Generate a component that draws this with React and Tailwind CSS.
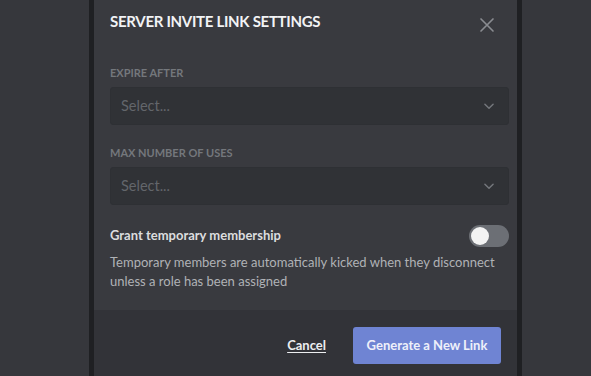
import React, { useState } from "react";

const ChevronDown = () => (
  <svg width="14" height="14" viewBox="0 0 24 24" fill="none" stroke="currentColor" strokeWidth="2.5" strokeLinecap="round" strokeLinejoin="round">
    <path d="M5 9l7 7 7-7" />
  </svg>
);

const CloseIcon = () => (
  <svg width="18" height="18" viewBox="0 0 24 24" fill="none" stroke="currentColor" strokeWidth="2.2" strokeLinecap="round">
    <path d="M4 4l16 16M20 4L4 20" />
  </svg>
);

const SelectBox = () => (
  <div className="flex h-[38px] items-center justify-between rounded-[3px] border border-[#2e3034] bg-[#303236] pl-[10px] pr-3">
    <span className="text-[14.5px] text-[#63666b]">Select...</span>
    <span className="text-[#74777c]">
      <ChevronDown />
    </span>
  </div>
);

const Label = ({ children }) => (
  <div className="text-[11px] font-bold uppercase leading-4 text-[#74777c]">{children}</div>
);

export default function App() {
  const [temp, setTemp] = useState(false);

  return (
    <div className="flex h-[376px] w-[591px] overflow-hidden bg-[#36373c] font-['Lato',sans-serif]">
      <div className="w-[89px] shrink-0" />
      <div className="w-[5px] shrink-0 bg-[#1f2023]" />

      {/* Modal */}
      <div className="flex w-[423px] shrink-0 flex-col bg-[#393a3f]">
        <div className="flex-1 pl-4 pr-2">
          <div className="flex items-start justify-between pt-[11px]">
            <h2 className="text-[15px] font-bold uppercase leading-5 tracking-[-0.02em] text-[#f2f3f5]">
              Server Invite Link Settings
            </h2>
            <button className="mr-[13px] mt-[5px] text-[#8a8c91]">
              <CloseIcon />
            </button>
          </div>

          <div className="mt-[31px]">
            <Label>Expire After</Label>
            <div className="mt-[6px]">
              <SelectBox />
            </div>
          </div>

          <div className="mt-[20px]">
            <Label>Max Number of Uses</Label>
            <div className="mt-[6px]">
              <SelectBox />
            </div>
          </div>

          <div className="mt-[20px] flex items-center justify-between">
            <span className="text-[13px] font-bold text-[#dcddde]">Grant temporary membership</span>
            <button
              onClick={() => setTemp(!temp)}
              className="flex h-[22px] w-[40px] items-center rounded-full bg-[#6c6f75] px-[2px]"
            >
              <span className={`h-[18px] w-[18px] rounded-full bg-[#f3f3f3] ${temp ? "ml-[18px]" : ""}`} />
            </button>
          </div>
          <p className="mt-[6px] text-[13px] leading-[19px] text-[#b0b2b6]">
            Temporary members are automatically kicked when they disconnect unless a role has been assigned
          </p>
        </div>

        <div className="flex h-[66px] shrink-0 items-center justify-end gap-[27px] bg-[#323338] pr-4 pt-[5px]">
          <button className="text-[13px] font-bold text-[#eceef0] underline underline-offset-2">Cancel</button>
          <button className="h-[37px] w-[148px] rounded-[3px] bg-[#6f84d3] text-center text-[13px] font-bold text-[#eef0fa]">
            Generate a New Link
          </button>
        </div>
      </div>

      <div className="w-[5px] shrink-0 bg-[#1f2023]" />
      <div className="flex-1" />
    </div>
  );
}
